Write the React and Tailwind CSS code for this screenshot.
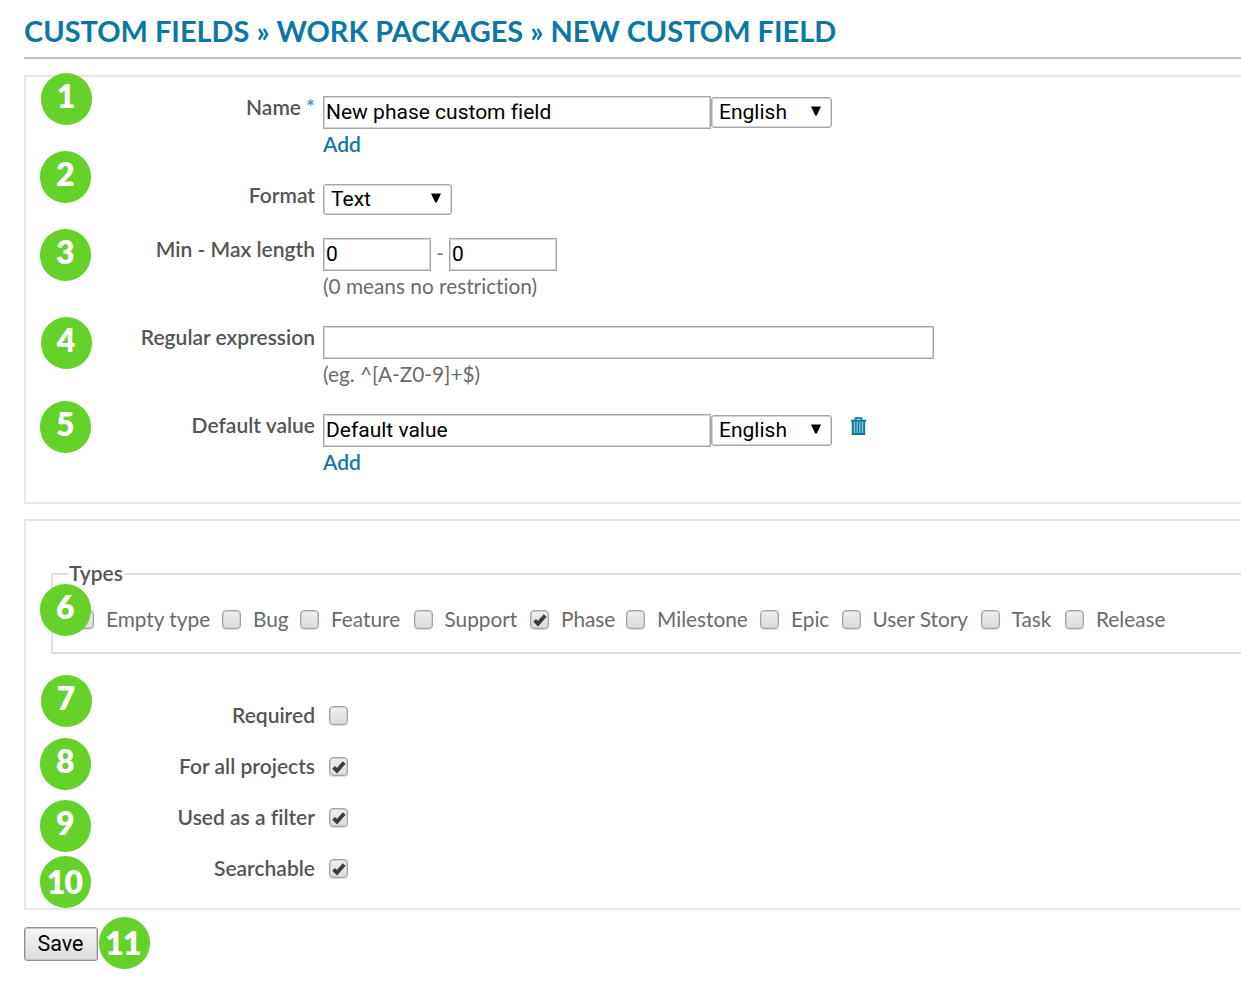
import React from "react";

const TYPES = [
  { name: "Empty type", width: "w-[147px]" },
  { name: "Bug", width: "w-[78px]" },
  { name: "Feature", width: "w-[113.5px]" },
  { name: "Support", width: "w-[116.5px]" },
  { name: "Phase", width: "w-[96px]", checked: true },
  { name: "Milestone", width: "w-[134px]" },
  { name: "Epic", width: "w-[81.5px]" },
  { name: "User Story", width: "w-[139px]" },
  { name: "Task", width: "w-[84.5px]" },
  { name: "Release", width: "w-[110px]" },
];

const BADGES = [
  { n: 1, at: "left-[41px] top-[73px]" },
  { n: 2, at: "left-[40.4px] top-[151px]" },
  { n: 3, at: "left-[40.4px] top-[229px]" },
  { n: 4, at: "left-[41px] top-[317px]" },
  { n: 5, at: "left-[40.4px] top-[401px]" },
  { n: 6, at: "left-[40.4px] top-[584px]" },
  { n: 7, at: "left-[41px] top-[675px]" },
  { n: 8, at: "left-[40.4px] top-[738px]" },
  { n: 9, at: "left-[40.4px] top-[799.5px]" },
  { n: 10, at: "left-[40.4px] top-[856px]", low: true },
  { n: 11, at: "left-[99px] top-[917px]", low: true },
];

function Badge({ n, at, low }) {
  return (
    <span
      className={`absolute flex h-[52px] w-[51px] justify-center rounded-full bg-[#65d22b] text-[32px] leading-[46px] font-extrabold text-white ${low ? "pt-[2.5px] pr-[3px] tracking-[-0.8px]" : "pr-px"} ${at}`}
    >
      {n}
    </span>
  );
}

function Checkbox({ checked }) {
  return (
    <span className="flex size-[19px] shrink-0 items-center justify-center rounded-[4px] border border-[#a4a4a4] bg-linear-to-b from-[#eeeeee] to-[#dcdcdc] shadow-[inset_0_0_0_1px_#cfcfcf,0_1px_1px_rgba(0,0,0,0.14)]">
      {checked && (
        <svg viewBox="0 0 14 14" className="size-[14px] shrink-0">
          <path d="M1.6 7.4 L5 10.7 L12.2 2.4" fill="none" stroke="#3c3c3c" strokeWidth="3.8" />
        </svg>
      )}
    </span>
  );
}

function TextBox({ value, className }) {
  return (
    <span
      className={`flex h-[33px] shrink-0 items-center border border-[#a6a6a6] bg-white pl-[2px] font-[Roboto,sans-serif] text-[21px] text-black shadow-[inset_0_0_0_1px_#d4d4d4] ${className}`}
    >
      {value}
    </span>
  );
}

function Select({ value, className }) {
  return (
    <span
      className={`flex h-[31px] shrink-0 items-center justify-between rounded-[3px] border border-[#a6a6a6] bg-white pr-[10px] font-[Roboto,sans-serif] text-[21px] text-black shadow-[inset_0_0_0_1px_#d4d4d4] ${className}`}
    >
      {value}
      <svg viewBox="0 0 10 10" className="mb-[3px] size-[10px]">
        <path d="M0 0.5 H10 L5.8 9.5 H4.2 Z" fill="#000" />
      </svg>
    </span>
  );
}

function Row({ label, required, height, shift = "-mt-px", children }) {
  return (
    <div className={`flex ${height}`}>
      <div className={`mr-[8px] w-[289px] shrink-0 text-right text-[21px] leading-6 font-semibold text-[#555] ${shift}`}>
        {label}
        {required && <span className="font-bold text-[#4a9ad6]"> *</span>}
      </div>
      <div>{children}</div>
    </div>
  );
}

function Trash() {
  return (
    <svg viewBox="0 0 15 18" className="mt-[3px] ml-[19px] h-[18px] w-[15px] text-[#0b78a3]">
      <path d="M4.5 3 V1.2 H10.5 V3" fill="none" stroke="currentColor" strokeWidth="1.8" />
      <path d="M1 4 H14 V18 H1 Z" fill="#8fc4dc" />
      <path d="M0 3.8 H15 M1.8 4 V17 H13.2 V4" fill="none" stroke="currentColor" strokeWidth="2" />
      <path d="M4.9 5 V16 M7.5 5 V16 M10.1 5 V16" stroke="currentColor" strokeWidth="1.3" />
    </svg>
  );
}

const LINK = "-mt-px text-[21px] leading-8 font-semibold text-[#1279a5]";
const HINT = "-mt-px leading-8 text-[#6b6b6b]";

export default function App() {
  return (
    <main className="relative h-[986px] w-[1241px] overflow-hidden bg-white pl-[24px] font-[Lato,sans-serif] text-[20.8px] [font-variant-ligatures:none]">
      <h1 className="h-[59px] border-b-2 border-[#bcbcbc] pt-[13px] text-[28.95px] leading-[36px] font-bold whitespace-nowrap text-[#0b78a3]">
        CUSTOM FIELDS » WORK PACKAGES » NEW CUSTOM FIELD
      </h1>

      <section className="mt-[16px] h-[429px] border-2 border-r-0 border-[#e8e8e8] pt-[19px]">
        <Row label="Name" required height="h-[88px]">
          <div className="flex">
            <TextBox value="New phase custom field" className="w-[388px]" />
            <Select value="English" className="mt-[1px] w-[121px] pl-[7px]" />
          </div>
          <div className={LINK}>Add</div>
        </Row>
        <Row label="Format" height="h-[54px]">
          <Select value="Text" className="w-[129px] pl-[7px]" />
        </Row>
        <Row label="Min - Max length" height="h-[88px]">
          <div className="flex">
            <TextBox value="0" className="w-[108px]" />
            <span className="w-[18px] pt-[3px] text-center leading-6 text-[#777]">-</span>
            <TextBox value="0" className="w-[108px]" />
          </div>
          <div className={HINT}>(0 means no restriction)</div>
        </Row>
        <Row label="Regular expression" height="h-[88px]">
          <TextBox value="" className="w-[611px]" />
          <div className={HINT}>(eg. ^[A-Z0-9]+$)</div>
        </Row>
        <Row label="Default value" height="h-[88px]">
          <div className="flex">
            <TextBox value="Default value" className="w-[388px]" />
            <Select value="English" className="mt-[1px] w-[121px] pl-[7px]" />
            <Trash />
          </div>
          <div className={LINK}>Add</div>
        </Row>
      </section>

      <section className="mt-[15px] h-[391px] border-2 border-r-0 border-[#e8e8e8] pt-[41px]">
        <fieldset className="ml-[25px] h-[92px] border-2 border-r-0 border-[#e0e0e0] pl-[22px]">
          <legend className="-ml-[7px] px-px pb-[3px] text-[21px] leading-[21px] font-semibold text-[#555]">Types</legend>
          <div className="mt-[22px] flex">
            {TYPES.map((t) => (
              <div key={t.name} className={`flex shrink-0 items-center ${t.width}`}>
                <Checkbox checked={t.checked} />
                <span className="-mt-px ml-[12px] leading-6 whitespace-nowrap text-[#6b6b6b]">{t.name}</span>
              </div>
            ))}
          </div>
        </fieldset>
        <div className="mt-[49px]">
          {["Required", "For all projects", "Used as a filter", "Searchable"].map((label, i) => (
            <Row key={label} label={label} height="h-[51px]" shift="mt-0">
              <div className="mt-[3px] ml-[6px]">
                <Checkbox checked={i > 0} />
              </div>
            </Row>
          ))}
        </div>
      </section>

      <button className="mt-[17px] flex h-[34px] w-[74px] items-center justify-center rounded-[3px] border border-[#8f8f8f] bg-linear-to-b from-[#f6f6f6] to-[#dddddd] pr-px font-[Roboto,sans-serif] text-[21.5px] text-black shadow-[inset_0_0_0_1px_#c8c8c8]">
        Save
      </button>

      {BADGES.map((b) => (
        <Badge key={b.n} {...b} />
      ))}
    </main>
  );
}
